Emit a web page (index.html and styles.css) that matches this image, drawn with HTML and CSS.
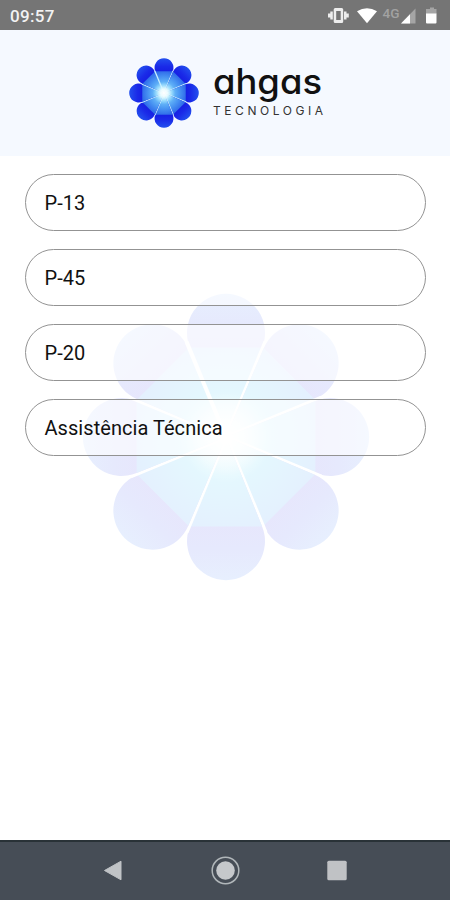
FILE: index.html
```
<!DOCTYPE html>
<html lang="pt-BR">
<head>
<meta charset="utf-8">
<meta name="viewport" content="width=device-width, initial-scale=1">
<title>ahgas</title>
<link rel="stylesheet" href="styles.css">
</head>
<body>
<div class="screen">
  <div class="status">
    <span class="clock">09:57</span>
    <svg class="status-icons" width="112" height="20" viewBox="0 0 112 20">
      <g fill="#ededed">
        <path d="M5.500 0h6.500a1.500 1.500 0 0 1 1.500 1.500v12a1.500 1.500 0 0 1-1.500 1.500H5.500a1.500 1.500 0 0 1-1.500-1.500v-12A1.500 1.500 0 0 1 5.500 0zM6.500 3v9h4.500V3z" fill-rule="evenodd" transform="translate(1.700 2)"/>
        <path d="M2.300 5.500h2.500v8H2.300zM0 7.500h2.300v4H0zM16 5.500h2.500v8H16zM18.500 7.500h2.300v4h-2.300z"/>
      </g>
      <path d="M29 5.200Q39-.8 49 5.200L39 17.200z" fill="#fff"/>
      <text class="network" x="54.500" y="12" textLength="17" lengthAdjust="spacingAndGlyphs">4G</text>
      <path d="M87.500 2.500v15H73z" fill="#a5a5a5"/>
      <path d="M82 8.200v9.300h-9z" fill="#fff"/>
      <path d="M100 3h2V1.500h4V3h2.500v5H98V3z" fill="#a5a5a5"/>
      <path d="M98 7.500h10.500v9a1 1 0 0 1-1 1H99a1 1 0 0 1-1-1z" fill="#fff"/>
    </svg>
  </div>
  <header class="brand">
    <svg class="mark" viewBox="-144 -144 288 288">
      <defs>
        <radialGradient id="core" gradientUnits="userSpaceOnUse" cx="0" cy="0" r="96">
          <stop offset="0" stop-color="#e4ffff"/>
          <stop offset=".3" stop-color="#76c9fb"/>
          <stop offset=".65" stop-color="#4b98f3"/>
          <stop offset="1" stop-color="#2a63e8"/>
        </radialGradient>
        <radialGradient id="glow">
          <stop offset="0" stop-color="#fff"/>
          <stop offset=".35" stop-color="#effeff" stop-opacity=".9"/>
          <stop offset="1" stop-color="#b5f2ff" stop-opacity="0"/>
        </radialGradient>
        <linearGradient id="tip" gradientUnits="userSpaceOnUse" x1="0" y1="-143" x2="0" y2="-75">
          <stop offset="0" stop-color="#2350ee"/>
          <stop offset=".5" stop-color="#1a2ae8"/>
          <stop offset="1" stop-color="#1419e0"/>
        </linearGradient>
        <g id="petal">
          <path d="M0 0-36.100-89.400A39 39 0 1 1 36.100-89.400Z" fill="url(#tip)"/>
          <path d="M0 0-36.100-89.400H36.100Z" fill="url(#core)"/>
          <path d="M0 0 38-92" stroke="#c7efff" stroke-width="5.500"/>
        </g>
      </defs>
      <use href="#petal"/><use href="#petal" transform="rotate(45)"/><use href="#petal" transform="rotate(90)"/><use href="#petal" transform="rotate(135)"/><use href="#petal" transform="rotate(180)"/><use href="#petal" transform="rotate(225)"/><use href="#petal" transform="rotate(270)"/><use href="#petal" transform="rotate(315)"/>
      <circle r="46" fill="url(#glow)"/>
    </svg>
    <svg class="wordmark" width="114" height="66" viewBox="0 0 114 66">
      <text class="name" x="3" y="35.800" textLength="109" lengthAdjust="spacingAndGlyphs">ahgas</text>
      <text class="sub" x="3" y="57" textLength="110">TECNOLOGIA</text>
    </svg>
  </header>
  <main class="content">
    <svg class="watermark" viewBox="-144 -144 288 288">
      <defs>
        <radialGradient id="paleCore" gradientUnits="userSpaceOnUse" cx="0" cy="0" r="96">
          <stop offset="0" stop-color="#fbffff"/>
          <stop offset=".4" stop-color="#e4f8fe"/>
          <stop offset="1" stop-color="#e4f0fe"/>
        </radialGradient>
        <radialGradient id="paleGlow">
          <stop offset="0" stop-color="#fff"/>
          <stop offset="1" stop-color="#fff" stop-opacity="0"/>
        </radialGradient>
        <linearGradient id="paleTip" gradientUnits="userSpaceOnUse" x1="0" y1="-143" x2="0" y2="-80">
          <stop offset="0" stop-color="#e7effe"/>
          <stop offset=".5" stop-color="#e6e9fd"/>
          <stop offset="1" stop-color="#e7e6fc"/>
        </linearGradient>
        <g id="palePetal">
          <path d="M0 0-36.100-89.400A39 39 0 1 1 36.100-89.400Z" fill="url(#paleTip)"/>
          <path d="M0 0-36.100-89.400H36.100Z" fill="url(#paleCore)"/>
          <path d="M0 0 39.500-95.400" stroke="#fff" stroke-width="4"/>
        </g>
      </defs>
      <use href="#palePetal"/><use href="#palePetal" transform="rotate(45)"/><use href="#palePetal" transform="rotate(90)"/><use href="#palePetal" transform="rotate(135)"/><use href="#palePetal" transform="rotate(180)"/><use href="#palePetal" transform="rotate(225)"/><use href="#palePetal" transform="rotate(270)"/><use href="#palePetal" transform="rotate(315)"/>
      <circle r="46" fill="url(#paleGlow)"/>
    </svg>
    <div class="options">
      <div class="option">P-13</div>
      <div class="option">P-45</div>
      <div class="option">P-20</div>
      <div class="option">Assistência Técnica</div>
    </div>
  </main>
  <nav class="navbar">
    <svg width="30" height="30" viewBox="0 0 30 30"><path d="M6.500 14.500 23 5.200v18.600z" fill="#c0c3c6" stroke="#c0c3c6" stroke-linejoin="round"/></svg>
    <svg width="30" height="30" viewBox="0 0 30 30"><circle cx="15.500" cy="14.500" r="13.300" fill="none" stroke="#b0b6b9" stroke-width="1.500"/><circle cx="15.500" cy="14.500" r="9.300" fill="#c5c8cb"/></svg>
    <svg width="30" height="30" viewBox="0 0 30 30"><rect x="5.300" y="4.800" width="19.400" height="19.400" rx="1.500" fill="#c0c2c5"/></svg>
  </nav>
</div>
</body>
</html>
```
FILE: styles.css
```
* { box-sizing: border-box; }
body { margin: 0; font-family: Roboto, sans-serif; background: #fff; }
.screen { width: 450px; height: 900px; display: flex; flex-direction: column; overflow: hidden; }
.status { height: 30px; flex: none; display: flex; align-items: center; justify-content: space-between; padding: 2px 10px 0; background: #757575; }
.clock { color: #f2f2f2; font-size: 17px; font-weight: 500; line-height: 20px; letter-spacing: .3px; }
.status-icons { overflow: visible; }
.network { font: 500 13px Roboto, sans-serif; fill: #a2a2a2; }
.brand { height: 126px; flex: none; display: flex; align-items: flex-start; padding: 28px 0 0 129px; background: #f5f9ff; }
.mark { width: 70px; height: 70px; }
.wordmark { margin-left: 11px; overflow: visible; }
.name { font: 500 35px Inter, sans-serif; font-feature-settings: "cv11" 1; fill: #111; }
.sub { font: 400 12px Inter, sans-serif; fill: #333; }
.content { flex: 1; position: relative; padding: 18px 24px 0 25px; }
.watermark { position: absolute; left: 82px; top: 137px; width: 288px; height: 288px; }
.options { position: relative; display: flex; flex-direction: column; gap: 18px; }
.option { height: 57px; padding: 0 18.5px; display: flex; align-items: center; border: 1px solid #939393; border-radius: 29px; background: rgba(255, 255, 255, .6); color: #111; font-size: 20px; letter-spacing: .05px; }
.navbar { height: 60px; flex: none; display: flex; justify-content: center; gap: 82px; padding-top: 14px; background: #464d56; border-top: 2px solid #293237; }
```
